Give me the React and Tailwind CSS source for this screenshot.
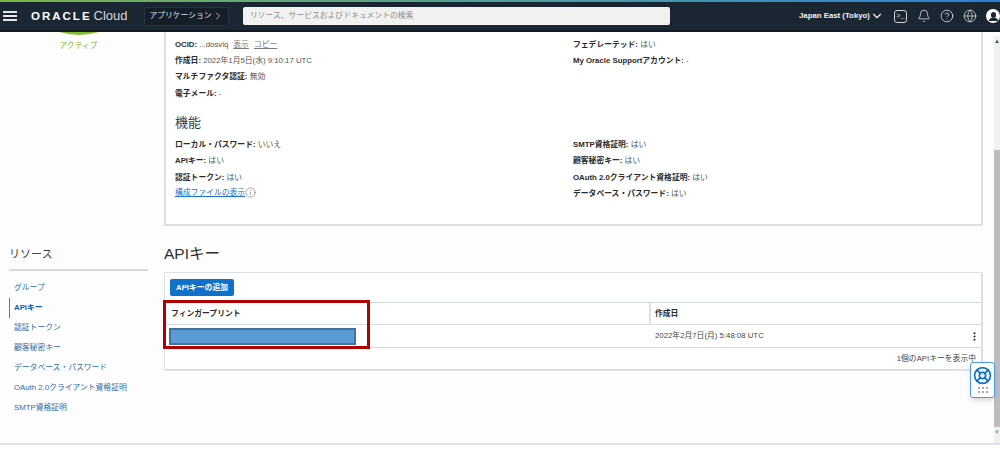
import React from "react";
import { ChevronDown, ChevronRight, Bell, Globe, CircleHelp, Info, EllipsisVertical, LifeBuoy } from "lucide-react";

const leftInfo = [
  ["作成日:", "2022年1月5日(水) 9:10:17 UTC"],
  ["マルチファクタ認証:", "無効"],
  ["電子メール:", "-"],
];
const rightInfo = [
  ["フェデレーテッド:", "はい"],
  ["My Oracle Supportアカウント:", "-"],
];
const leftCaps = [
  ["ローカル・パスワード:", "いいえ"],
  ["APIキー:", "はい"],
  ["認証トークン:", "はい"],
];
const rightCaps = [
  ["SMTP資格証明:", "はい"],
  ["顧客秘密キー:", "はい"],
  ["OAuth 2.0クライアント資格証明:", "はい"],
  ["データベース・パスワード:", "はい"],
];
const resources = ["グループ", "APIキー", "認証トークン", "顧客秘密キー", "データベース・パスワード", "OAuth 2.0クライアント資格証明", "SMTP資格証明"];

const Field = ({ label, value }) => (
  <div className="h-[16.33px] leading-[16px] whitespace-nowrap">
    <span className="font-bold text-[#2c2b29]">{label}</span> <span className="text-[#55534f]">{value}</span>
  </div>
);

export default function App() {
  return (
    <div className="relative w-[1000px] h-[449px] overflow-hidden bg-[#fdfdfd] text-[7.8px] text-[#312d2a] font-['Liberation_Sans','Noto_Sans_CJK_JP',sans-serif]">
      {/* top bar */}
      <div className="h-[2px] bg-gradient-to-r from-[#7cb342] to-[#2f7fd6]" />
      <header className="h-[30px] bg-[#1a2632] border-b-2 border-b-[#101a24] flex items-center text-white">
        <div className="w-[30px] shrink-0 pl-[3px] flex flex-col gap-[2.5px]">
          <span className="block w-[14px] h-[1.5px] bg-[#e4e6e8]" />
          <span className="block w-[14px] h-[1.5px] bg-[#e4e6e8]" />
          <span className="block w-[14px] h-[1.5px] bg-[#e4e6e8]" />
        </div>
        <div className="w-[114px] shrink-0 pl-[1px] whitespace-nowrap leading-none">
          <span className="font-bold text-[11.5px] tracking-[2px]">ORACLE</span>
          <span className="text-[13px] text-[#d5d8da] ml-[2px]">Cloud</span>
        </div>
        <div className="w-[85px] shrink-0 h-[19px] bg-[#141e29] border border-[#28333f] rounded-[2px] flex items-center justify-center text-[#e0e3e5]">
          アプリケーション
          <ChevronRight size={12} strokeWidth={1.5} />
        </div>
        <div className="ml-[14px] w-[427px] shrink-0 h-[18px] bg-[#f1f1ef] rounded-[2px] flex items-center pl-[7px] text-[#8b8e90]">
          リソース、サービスおよびドキュメントの検索
        </div>
        <div className="ml-[129px] w-[85px] shrink-0 flex items-center font-bold text-[#f1f3f4] whitespace-nowrap">
          Japan East (Tokyo)
          <ChevronDown size={14} strokeWidth={2} />
        </div>
        <div className="ml-[10px] shrink-0 w-[13px] h-[13px] border border-[#cfd3d6] rounded-[3px] flex items-center justify-center text-[7px] leading-none font-['Liberation_Mono',monospace] text-[#e5e7e9]">
          &gt;_
        </div>
        <Bell size={14} strokeWidth={1.3} className="ml-[10px] shrink-0 text-[#e5e7e9]" />
        <CircleHelp size={14} strokeWidth={1.3} className="ml-[9px] shrink-0 text-[#e5e7e9]" />
        <Globe size={14} strokeWidth={1.2} className="ml-[9px] shrink-0 text-[#e5e7e9]" />
        <div className="ml-[9px] shrink-0 w-[14px] h-[14px] rounded-full bg-white flex flex-col items-center justify-center overflow-hidden">
          <span className="block w-[5px] h-[6px] rounded-full bg-[#1a2632]" />
          <span className="block w-[9px] h-[3px] bg-[#1a2632] rounded-t-full" />
        </div>
      </header>

      <div className="flex h-[411px]">
        {/* left column */}
        <aside className="w-[164px] shrink-0 pl-[9px]">
          <div className="h-[3px] overflow-hidden w-[139px] flex justify-center">
            <div className="w-[130px] h-[130px] rounded-full bg-[#84bd2f] -mt-[127px] shrink-0" />
          </div>
          <p className="w-[139px] mt-[5px] text-center text-[#7fb23f] leading-[12px]">アクティブ</p>
          <h3 className="mt-[193px] text-[11px] leading-[18px] text-[#3f3c39]">リソース</h3>
          <div className="w-[139px] h-[2px] mt-[6px] bg-[#d6dade]" />
          <nav className="mt-[7px] w-[139px]">
            {resources.map((r, i) => (
              <div
                key={r}
                className={`h-[20px] leading-[20px] pl-[4px] whitespace-nowrap border-l ${i === 1 ? "font-bold text-[#0f5fa8] border-[#3b82c4]" : "text-[#2a6cb0] border-transparent"}`}
              >
                {r}
              </div>
            ))}
          </nav>
        </aside>

        {/* main column */}
        <main className="w-[819px] shrink-0">
          <section className="h-[194px] bg-white border-2 border-t-0 border-[#dcdfe3] pl-[9px] pt-[5px]">
            <div className="grid grid-cols-[398px_1fr]">
              <div>
                <div className="h-[16px] leading-[16px] whitespace-nowrap">
                  <span className="font-bold text-[#2c2b29]">OCID:</span> <span className="text-[#55534f]">...dosvlq</span>
                  <span className="underline text-[#7d7a76] ml-[5px]">表示</span>
                  <span className="underline text-[#7d7a76] ml-[5px]">コピー</span>
                </div>
                {leftInfo.map(([l, v]) => <Field key={l} label={l} value={v} />)}
              </div>
              <div>
                {rightInfo.map(([l, v]) => <Field key={l} label={l} value={v} />)}
              </div>
            </div>
            <h4 className="mt-[12px] text-[13px] leading-[18px] text-[#3f3c39]">機能</h4>
            <div className="grid grid-cols-[398px_1fr] mt-[5px]">
              <div>
                {leftCaps.map(([l, v]) => <Field key={l} label={l} value={v} />)}
                <div className="flex items-center h-[14px]">
                  <span className="underline text-[#1a73c7]">構成ファイルの表示</span>
                  <Info size={11} strokeWidth={1.4} className="text-[#77746f]" />
                </div>
              </div>
              <div>
                {rightCaps.map(([l, v]) => <Field key={l} label={l} value={v} />)}
              </div>
            </div>
          </section>

          <h2 className="mt-[17px] text-[15.5px] leading-[22px] text-[#312d2a]">APIキー</h2>
          <section className="relative mt-[7px] h-[99px] bg-white border-2 border-[#dcdfe3] rounded-[2px] border-t-1 border-l-1">
            <div className="h-[29px] pl-[5px] pt-[6px]">
              <button className="block h-[17px] w-[64px] bg-[#0f72c8] rounded-[2px] text-white font-bold leading-[17px] text-center">
                APIキーの追加
              </button>
            </div>
            <div className="grid grid-cols-[484px_1fr] h-[22px] border-t border-[#d5dae0] items-center font-bold text-[#2c2b29]">
              <div className="pl-[6px]">フィンガープリント</div>
              <div className="pl-[4px] h-full flex items-center border-l-2 border-[#dfe3e7]">作成日</div>
            </div>
            <div className="grid grid-cols-[484px_1fr] h-[23px] border-t border-[#d5dae0] items-center">
              <div className="pl-[4px]">
                <div className="w-[187px] h-[17px] bg-[#5b9bd5] border-2 border-[#41719c]" />
              </div>
              <div className="pl-[6px] flex items-center justify-between pr-[1px] text-[#4a4743]">
                <span>2022年2月7日(月) 5:48:08 UTC</span>
                <EllipsisVertical size={11} strokeWidth={2.5} className="text-[#222]" />
              </div>
            </div>
            <div className="h-[23px] border-t border-[#d5dae0] text-right pr-[5px] leading-[21px] text-[#4a4743]">
              1個のAPIキーを表示中
            </div>
            {/* red annotation around the fingerprint column */}
            <div className="absolute left-[-2px] top-[27px] w-[207px] h-[49px] border-[3px] border-[#b00000]" />
          </section>
        </main>

        {/* scrollbar, cut off by the window edge */}
        <div className="w-[17px] shrink-0 pl-[11px] pt-[4px]">
          <div className="w-[6px] h-full bg-[#f1f1f1] flex flex-col items-end overflow-hidden">
            <span className="mt-[2px] h-[6px] text-[6px] leading-none text-[#505050]">▲</span>
            <div className="w-[6px] h-[277px] mt-[106px] bg-[#bdbdbd] shrink-0" />
            <span className="mt-[2px] text-[6px] leading-none text-[#a0a0a0]">▼</span>
          </div>
        </div>
      </div>

      <div className="h-[2px] bg-[#dfe1e4]" />
      <div className="h-[4px] bg-white" />

      {/* help widget floats over the page */}
      <div className="absolute left-[970px] top-[362px] w-[25px] h-[36px] bg-white border border-[#4a9ae0] rounded-[3px] shadow-md flex flex-col items-center pt-[3px]">
        <LifeBuoy size={19} strokeWidth={2.2} className="text-[#1170c9]" />
        <div className="grid grid-cols-3 gap-[2px] mt-[2px]">
          {[0, 1, 2, 3, 4, 5].map((n) => (
            <span key={n} className="block w-[2px] h-[2px] bg-[#a5a8ab]" />
          ))}
        </div>
      </div>
    </div>
  );
}
